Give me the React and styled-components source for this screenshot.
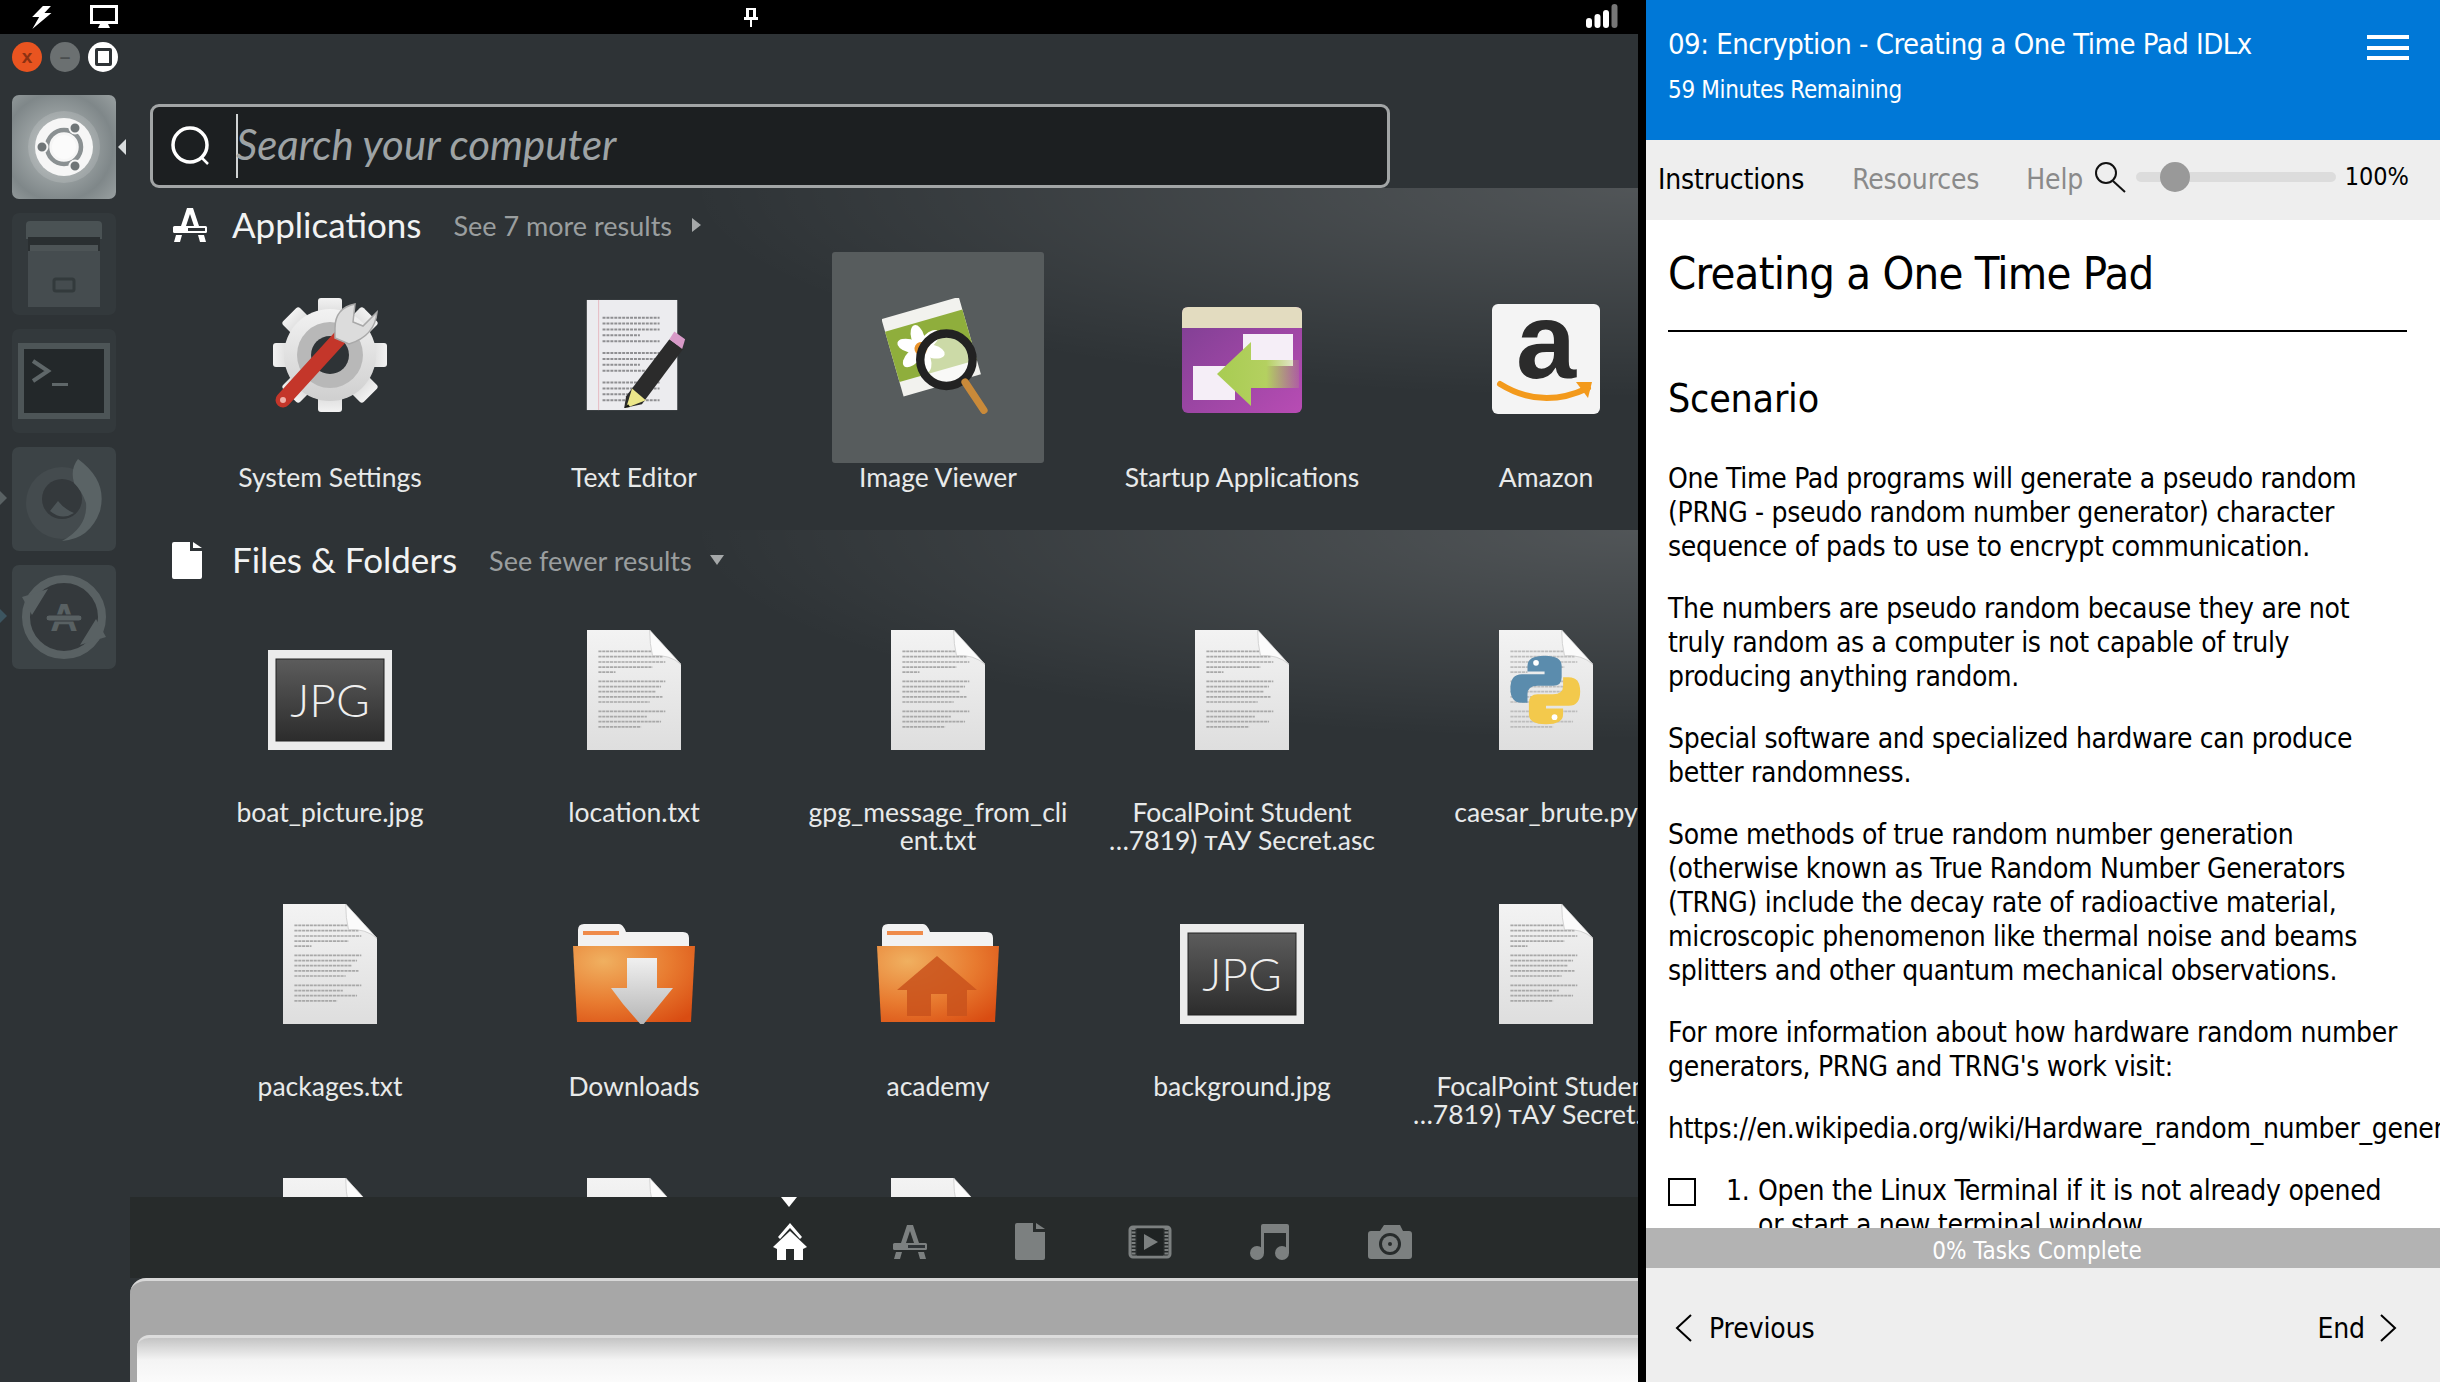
import React from "react";
import styled, { createGlobalStyle } from "styled-components";

const Global = createGlobalStyle`
  html, body { margin: 0; padding: 0; background: #000; }
  body { width: 2440px; height: 1382px; overflow: hidden; }
`;

const UI_FONT = `Lato, "Noto Sans", sans-serif`;
const DOC_FONT = `"DejaVu Sans Condensed", "DejaVu Sans", sans-serif`;

const Page = styled.div`
  display: flex;
  width: 2440px;
  height: 1382px;
  overflow: hidden;
`;

const Desktop = styled.div`
  width: 1646px;
  height: 1382px;
  background: #000;
  display: flex;
  flex-direction: column;
  flex-shrink: 0;
`;

const TopBar = styled.div`
  height: 34px;
  display: flex;
  align-items: center;
  padding: 0 28px 0 32px;
  color: #fff;
`;

const PinSlot = styled.div`
  margin-left: 625px;
  display: flex;
`;

const SignalSlot = styled.div`
  margin-left: auto;
  display: flex;
`;

const Dash = styled.div`
  width: 1638px;
  flex: 1;
  min-height: 0;
  display: flex;
  background: #2e3336;
  font-family: ${UI_FONT};
`;

const LauncherColumn = styled.div`
  width: 130px;
  flex-shrink: 0;
  box-sizing: border-box;
  padding: 8px 0 0 12px;
  position: relative;
`;

const WindowControls = styled.div`
  display: flex;
  gap: 8px;
  height: 53px;
`;

const WinBtn = styled.div`
  width: 30px;
  height: 30px;
  border-radius: 50%;
  display: flex;
  align-items: center;
  justify-content: center;
  background: ${(p) => p.$bg};
  color: ${(p) => p.$fg};
  font: 700 19px "Liberation Sans", sans-serif;
`;

const MaxSquare = styled.div`
  width: 11px;
  height: 12px;
  border: 3px solid #2e3336;
  border-radius: 2px;
`;

const Tiles = styled.div`
  display: flex;
  flex-direction: column;
  gap: 14px;
`;

const Tile = styled.div`
  width: 104px;
  height: ${(p) => p.$h || 102}px;
  border-radius: 7px;
  position: relative;
  display: flex;
  align-items: center;
  justify-content: center;
  background: ${(p) =>
    p.$active
      ? "radial-gradient(circle at 45% 50%, #c6cbcc 0%, #9aa1a2 38%, #7f8789 70%, #99a0a1 100%)"
      : p.$flat
      ? "#3c4346"
      : "#33393c"};
`;

const Pip = styled.div`
  position: absolute;
  top: ${(p) => p.$top}px;
  left: ${(p) => p.$left}px;
  width: 0;
  height: 0;
  border-top: ${(p) => p.$size}px solid transparent;
  border-bottom: ${(p) => p.$size}px solid transparent;
  ${(p) =>
    p.$dir === "left"
      ? `border-right: ${p.$size}px solid ${p.$color};`
      : `border-left: ${p.$size}px solid ${p.$color};`}
`;

const Main = styled.div`
  width: 1508px;
  display: flex;
  flex-direction: column;
  min-height: 0;
`;

const SearchWrap = styled.div`
  padding: 70px 0 0 20px;
  flex-shrink: 0;
`;

const SearchBox = styled.div`
  width: 1240px;
  height: 84px;
  box-sizing: border-box;
  border: 3px solid #a2a5a6;
  border-radius: 9px;
  background: #1c1f21;
  display: flex;
  align-items: center;
  padding-left: 17px;
`;

const Caret = styled.div`
  width: 2px;
  height: 64px;
  background: #d0d3d4;
  margin-left: 22px;
  margin-right: -2px;
`;

const SearchText = styled.div`
  font-size: 42px;
  font-style: italic;
  font-weight: 400;
  color: #9ea3a5;
  margin-top: -4px;
`;

const Results = styled.div`
  flex: 1;
  min-height: 0;
  overflow: hidden;
`;

const Section = styled.div`
  height: ${(p) => p.$h}px;
  box-sizing: border-box;
  padding-top: ${(p) => p.$pt}px;
  background: radial-gradient(
    ellipse 950px 210px at 100% 0,
    rgba(255, 255, 255, 0.17),
    rgba(255, 255, 255, 0) 100%
  );
`;

const SectionHead = styled.div`
  height: 60px;
  display: flex;
  align-items: center;
  padding-left: 42px;
`;

const HeadIcon = styled.div`
  width: 60px;
  display: flex;
`;

const SectionTitle = styled.div`
  font-size: 35px;
  color: #f2f3f3;
  margin-right: 32px;
  margin-top: -2px;
`;

const SectionMore = styled.div`
  font-size: 27px;
  color: #9a9e9f;
  margin-right: ${(p) => p.$gap}px;
`;

const Arrow = styled.div`
  width: 0;
  height: 0;
  ${(p) =>
    p.$down
      ? `border-left: 7px solid transparent; border-right: 7px solid transparent; border-top: 10px solid #a5a8a9;`
      : `border-top: 7px solid transparent; border-bottom: 7px solid transparent; border-left: 9px solid #a5a8a9;`}
`;

const Grid = styled.div`
  display: grid;
  grid-template-columns: repeat(5, 304px);
  grid-auto-rows: ${(p) => p.$row}px;
  margin-top: ${(p) => p.$mt}px;
  padding-left: 48px;
`;

const Cell = styled.div`
  display: flex;
  flex-direction: column;
  align-items: center;
  min-width: 0;
`;

const IconTile = styled.div`
  width: 212px;
  height: ${(p) => p.$h}px;
  flex-shrink: 0;
  box-sizing: border-box;
  padding-bottom: ${(p) => p.$pb}px;
  display: flex;
  align-items: flex-end;
  justify-content: center;
  border-radius: 3px;
  background: ${(p) => (p.$selected ? "#575c5d" : "transparent")};
`;

const Label = styled.div`
  font-size: 26.5px;
  line-height: 28px;
  color: #e8eaea;
  text-align: center;
  white-space: pre;
`;

const FilterBar = styled.div`
  height: 81px;
  flex-shrink: 0;
  background: #272b2b;
  display: flex;
  align-items: center;
  padding-left: 600px;
`;

const FilterSlot = styled.div`
  width: 120px;
  height: 81px;
  box-sizing: border-box;
  padding-top: 8px;
  display: flex;
  align-items: center;
  justify-content: center;
  position: relative;
  color: ${(p) => (p.$active ? "#fff" : "#7c8080")};
`;

const FilterMark = styled.div`
  position: absolute;
  top: 0;
  left: 51px;
  width: 0;
  height: 0;
  border-left: 8px solid transparent;
  border-right: 8px solid transparent;
  border-top: 10px solid #fff;
`;

const Preview = styled.div`
  height: 104px;
  flex-shrink: 0;
  box-sizing: border-box;
  border-top: 3px solid #d8d8d8;
  border-top-left-radius: 16px;
  background: #a7a7a7;
  padding: 54px 0 0 7px;
`;

const PreviewInner = styled.div`
  height: 100%;
  border-top: 3px solid #dcdcdc;
  border-top-left-radius: 12px;
  background: linear-gradient(#c4c4c4 0, #f4f4f4 22px, #fcfcfc 100%);
`;

const Lab = styled.div`
  width: 794px;
  height: 1382px;
  flex-shrink: 0;
  display: flex;
  flex-direction: column;
  background: #fff;
  font-family: ${DOC_FONT};
  color: #000;
`;

const LabHeader = styled.div`
  height: 140px;
  flex-shrink: 0;
  box-sizing: border-box;
  background: #0078d7;
  color: #fff;
  padding: 24px 31px 0 22px;
  display: flex;
  justify-content: space-between;
`;

const LabTitle = styled.div`
  font-size: 29px;
  line-height: 40px;
  letter-spacing: -0.5px;
`;

const LabSub = styled.div`
  font-size: 24px;
  line-height: 32px;
  margin-top: 10px;
  letter-spacing: -0.35px;
`;

const Burger = styled.div`
  width: 42px;
  height: 25px;
  margin-top: 11px;
  display: flex;
  flex-direction: column;
  justify-content: space-between;
  & > span {
    display: block;
    height: 4px;
    background: #fff;
  }
`;

const TabBar = styled.div`
  height: 80px;
  flex-shrink: 0;
  background: #eeeeee;
  display: flex;
  align-items: center;
  padding: 0 31px 0 12px;
`;

const TabItem = styled.div`
  font-size: 28px;
  letter-spacing: -0.15px;
  color: ${(p) => (p.$active ? "#000" : "#8a8a8a")};
  margin-right: ${(p) => p.$mr}px;
  margin-top: -2px;
`;

const ZoomIcon = styled.div`
  display: flex;
  margin-top: -6px;
`;

const Track = styled.div`
  width: 200px;
  height: 10px;
  border-radius: 5px;
  margin: -6px 0 0 10px;
  background: #dcdcdc;
  position: relative;
`;

const Thumb = styled.div`
  position: absolute;
  left: 24px;
  top: -10px;
  width: 30px;
  height: 30px;
  border-radius: 50%;
  background: #999;
`;

const ZoomPct = styled.div`
  font-size: 25px;
  margin-left: auto;
  margin-top: -7px;
`;

const LabBody = styled.div`
  flex: 1;
  min-height: 0;
  overflow: hidden;
  padding: 0 33px 0 22px;
`;

const H1 = styled.h1`
  margin: 0;
  padding-top: 26px;
  height: 112px;
  box-sizing: border-box;
  border-bottom: 2px solid #000;
  font-size: 45px;
  line-height: 56px;
  font-weight: 400;
  letter-spacing: -0.75px;
`;

const H2 = styled.h2`
  margin: 0;
  padding-top: 42px;
  height: 130px;
  box-sizing: border-box;
  font-size: 39px;
  line-height: 50px;
  font-weight: 400;
  letter-spacing: -0.2px;
`;

const Para = styled.p`
  margin: 0 0 28px;
  font-size: 28px;
  line-height: 34px;
  letter-spacing: -0.3px;
  white-space: ${(p) => (p.$nowrap ? "nowrap" : "normal")};
`;

const Task = styled.div`
  display: flex;
  font-size: 28px;
  line-height: 34px;
  letter-spacing: -0.27px;
`;

const Check = styled.div`
  width: 28px;
  height: 28px;
  box-sizing: border-box;
  border: 2px solid #000;
  flex-shrink: 0;
  margin: 4px 30px 0 0;
`;

const TaskNum = styled.div`
  width: 32px;
  flex-shrink: 0;
`;

const Progress = styled.div`
  height: 40px;
  flex-shrink: 0;
  box-sizing: border-box;
  padding: 3px 12px 0 0;
  background: #b3b3b3;
  color: #fff;
  font-size: 24px;
  line-height: 40px;
  text-align: center;
`;

const Footer = styled.div`
  height: 114px;
  flex-shrink: 0;
  box-sizing: border-box;
  padding: 6px 43px 0 29px;
  background: #eeeeee;
  display: flex;
  align-items: center;
  justify-content: space-between;
  font-size: 28px;
  letter-spacing: -0.1px;
`;

const NavItem = styled.div`
  display: flex;
  align-items: center;
  gap: ${(p) => p.$gap}px;
`;

/* ---------- drawn icons ---------- */

const Bolt = () => (
  <svg width="22" height="24" viewBox="0 0 22 24">
    <path d="M12 1 L20 1 L14 8 L21 8 L3 24 L9 12 L2 12 Z" fill="#fff" transform="translate(-1 0) skewX(-4)" />
  </svg>
);

const Monitor = () => (
  <svg width="28" height="24" viewBox="0 0 28 24" style={{ marginLeft: 36 }}>
    <rect x="1.5" y="1.5" width="25" height="16" fill="none" stroke="#fff" strokeWidth="3" />
    <path d="M10 19 H18 L20 23 H8 Z" fill="#fff" />
  </svg>
);

const Pin = () => (
  <svg width="16" height="22" viewBox="0 0 16 22">
    <path d="M3 2 H13 V11 H15 V14 H9 V21 H7 V14 H1 V11 H3 Z M6 4 V11 H10 V4 Z" fill="#fff" fillRule="evenodd" />
  </svg>
);

const Signal = () => (
  <svg width="32" height="26" viewBox="0 0 32 26">
    <rect x="0" y="14" width="6" height="10" rx="3" fill="#fff" />
    <rect x="8.5" y="10" width="6" height="14" rx="3" fill="#fff" />
    <rect x="17" y="6" width="6" height="18" rx="3" fill="#fff" />
    <rect x="25.5" y="0" width="6" height="24" rx="3" fill="#777" />
  </svg>
);

const UbuntuLogo = () => (
  <svg width="76" height="76" viewBox="0 0 76 76">
    <circle cx="38" cy="38" r="36" fill="#fff" opacity="0.14" />
    <circle cx="38" cy="38" r="29" fill="#f6f6f6" />
    <circle cx="38" cy="38" r="17" fill="none" stroke="#8a9092" strokeWidth="4.5" />
    <circle cx="38" cy="38" r="12" fill="#fbfbfb" />
    <g fill="#6f7577" stroke="#f6f6f6" strokeWidth="2">
      <circle cx="49" cy="19" r="5.5" />
      <circle cx="49" cy="57" r="5.5" />
      <circle cx="16" cy="38" r="5.5" />
    </g>
  </svg>
);

const CabinetIcon = () => (
  <svg width="84" height="86" viewBox="0 0 84 86">
    <path d="M4 4 Q4 0 8 0 H76 Q80 0 80 4 V18 H4 Z" fill="#4a5254" />
    <rect x="6" y="16" width="72" height="70" fill="#454c4f" />
    <rect x="6" y="16" width="72" height="14" fill="#2a2f31" />
    <rect x="8" y="24" width="68" height="6" fill="#4d5456" />
    <rect x="32" y="58" width="20" height="12" rx="2" fill="none" stroke="#333a3c" strokeWidth="3" />
  </svg>
);

const TerminalIcon = () => (
  <svg width="92" height="76" viewBox="0 0 92 76">
    <rect x="3" y="3" width="86" height="70" fill="#23282a" stroke="#4d5557" strokeWidth="6" />
    <path d="M15 18 L30 28 L15 38" fill="none" stroke="#5f6769" strokeWidth="4" />
    <rect x="34" y="40" width="16" height="3" fill="#5f6769" />
  </svg>
);

const FirefoxIcon = () => (
  <svg width="96" height="96" viewBox="0 0 96 96">
    <circle cx="46" cy="52" r="36" fill="#444b4e" />
    <circle cx="46" cy="48" r="20" fill="#34393c" />
    <path d="M62 8 Q92 30 84 60 Q74 88 46 90 Q72 76 70 52 Q66 40 58 32 Q54 18 62 8 Z" fill="#5a6365" />
    <path d="M34 60 Q46 70 58 62 Q48 58 42 50 Z" fill="#4d5558" />
  </svg>
);

const UpdaterIcon = () => (
  <svg width="92" height="92" viewBox="0 0 92 92">
    <circle cx="46" cy="46" r="38" fill="#34393c" stroke="#596163" strokeWidth="8" />
    <path d="M4 26 L30 18 L14 44 Z M88 66 L62 74 L78 48 Z" fill="#596163" />
    <text x="46" y="60" textAnchor="middle" fontFamily="Liberation Sans" fontWeight="700" fontSize="38" fill="#596163">A</text>
    <rect x="28" y="44" width="36" height="6" rx="3" fill="#596163" stroke="#34393c" strokeWidth="1" />
  </svg>
);

const AppsGlyph = ({ size = 36, color = "#fff" }) => (
  <svg width={size} height={size} viewBox="0 0 36 36" fill={color}>
    <path d="M15 1 H21 L27 19 H22 L18 7 L14 19 H9 Z" />
    <rect x="1" y="19" width="34" height="7" rx="1.5" />
    <rect x="16" y="21" width="17" height="3" fill="#2e3336" />
    <path d="M4 28 H10 L8 35 H2 Z M26 28 H32 L34 35 H28 Z" />
  </svg>
);

const FileGlyph = ({ color = "#fff", w = 30, h = 37 }) => (
  <svg width={w} height={h} viewBox="0 0 30 37" fill={color}>
    <path d="M2 0 H18 V9 H30 V35 Q30 37 28 37 H2 Q0 37 0 35 V2 Q0 0 2 0 Z" />
    <path d="M21 0 L30 6 H21 Z" />
  </svg>
);

const HomeGlyph = () => (
  <svg width="38" height="37" viewBox="0 0 38 37" fill="#fff">
    <path d="M19 0 L31 14 L29 16 L19 5 L9 16 L7 14 Z" />
    <path d="M19 8 L36 24 L32 26 V37 H23 V26 H15 V37 H6 V26 L2 24 Z" />
  </svg>
);

const VideoGlyph = () => (
  <svg width="44" height="34" viewBox="0 0 44 34">
    <rect x="2" y="2" width="40" height="30" rx="3" fill="none" stroke="currentColor" strokeWidth="3" />
    <path d="M5.5 3 V31 M38.5 3 V31" stroke="currentColor" strokeWidth="4" strokeDasharray="2 1.5" />
    <rect x="9" y="3.5" width="26" height="27" fill="#1f2323" />
    <path d="M16 9 L30 17 L16 25 Z" fill="currentColor" />
  </svg>
);

const MusicGlyph = () => (
  <svg width="44" height="36" viewBox="0 0 44 36" fill="currentColor">
    <circle cx="9" cy="29" r="7" />
    <circle cx="34" cy="29" r="7" />
    <path d="M13 29 V2 Q13 0 15 0 H39 Q41 0 41 2 V29 H38 V9 H16 V29 Z" />
  </svg>
);

const CameraGlyph = () => (
  <svg width="44" height="34" viewBox="0 0 44 34">
    <path d="M3 6 H12 L16 0 H32 L35 6 H41 Q44 6 44 9 V31 Q44 34 41 34 H3 Q0 34 0 31 V9 Q0 6 3 6 Z" fill="currentColor" />
    <circle cx="22" cy="19" r="11" fill="#272b2b" />
    <circle cx="22" cy="19" r="8" fill="currentColor" />
    <circle cx="22" cy="19" r="2" fill="#272b2b" />
  </svg>
);

const SettingsIcon = () => (
  <svg width="118" height="118" viewBox="0 0 118 118">
    <defs>
      <linearGradient id="gearFill" x1="0" y1="0" x2="0" y2="1">
        <stop offset="0" stopColor="#f2f2f2" />
        <stop offset="1" stopColor="#cfcfcf" />
      </linearGradient>
    </defs>
    <g fill="url(#gearFill)">
      {[0, 45, 90, 135, 180, 225, 270, 315].map((a) => (
        <rect key={a} x="47" y="2" width="24" height="26" rx="3" transform={`rotate(${a} 59 59)`} />
      ))}
      <circle cx="59" cy="59" r="46" />
    </g>
    <circle cx="59" cy="59" r="33" fill="#b8b8b8" />
    <circle cx="59" cy="59" r="19" fill="#2e3336" />
    <path d="M12 104 L74 36" stroke="#c4362a" strokeWidth="15" strokeLinecap="round" />
    <circle cx="12" cy="104" r="3" fill="#efb0a8" />
    <path d="M64 42 L78 48 Q104 40 106 16 L92 30 L82 26 L84 8 Q64 12 64 32 Z" fill="#dcdcdc" stroke="#a9a9a9" strokeWidth="1.5" />
  </svg>
);

const docLines = [
  [15, 47], [18.7, 45], [22.4, 47], [26, 38], [29.5, 12],
  [36, 47], [39.6, 44], [43.2, 40], [46.8, 45], [50.4, 36],
  [57, 47], [60.6, 34], [64.2, 44], [67.8, 30],
];

const DocBase = ({ id, lineColor = "#a8a8a8", children, width = 94, height = 120 }) => (
  <svg width={width} height={height} viewBox="0 0 66 84" preserveAspectRatio="none">
    <defs>
      <linearGradient id={id} x1="0" y1="0" x2="0" y2="1">
        <stop offset="0" stopColor="#f3f3f3" />
        <stop offset="1" stopColor="#dedede" />
      </linearGradient>
    </defs>
    <path d="M0 0 H44 L66 24 V84 H0 Z" fill={`url(#${id})`} />
    {docLines.map(([y, w]) => (
      <line key={y} x1="8" x2={8 + w} y1={y} y2={y} stroke={lineColor} strokeWidth="1.2" strokeDasharray="2.2 0.5" />
    ))}
    <path d="M44 0 L66 24 Q58 17 46 18 Q44 10 44 0 Z" fill="#fbfbfb" stroke="#c4c4c4" strokeWidth="0.5" />
    {children}
  </svg>
);

const TextDoc = ({ id }) => <DocBase id={id} />;

const PythonDoc = () => (
  <DocBase id="docPy" lineColor="#bdbdbd">
    <path d="M32 18 Q20 18 20 25 V29 H32 V31 H16 Q8 31 8 41 Q8 51 16 51 H20 V45 Q20 39 27 39 H38 Q44 39 44 33 V25 Q44 18 32 18 Z" fill="#5b8cad" />
    <path d="M33 66 Q45 66 45 59 V55 H33 V53 H49 Q57 53 57 43 Q57 33 49 33 H45 V39 Q45 45 38 45 H27 Q21 45 21 51 V59 Q21 66 33 66 Z" fill="#f3c94c" />
    <circle cx="26" cy="23" r="2" fill="#fff" />
    <circle cx="39" cy="61" r="2" fill="#fff" />
  </DocBase>
);

const EditorIcon = () => (
  <svg width="104" height="116" viewBox="0 0 104 118">
    <rect x="4" y="2" width="92" height="112" fill="#ececef" />
    <line x1="16" x2="16" y1="2" y2="114" stroke="#e6b9c2" strokeWidth="1" />
    {[20, 26, 32, 38, 44, 56, 62, 68, 74, 86, 92, 98, 104].map((y, i) => (
      <line key={y} x1="20" x2={i % 4 === 3 ? 58 : 78} y1={y} y2={y} stroke="#8f8f92" strokeWidth="2" strokeDasharray="3 1" />
    ))}
    <path d="M44 100 L88 42 L102 52 L60 108 L42 112 Z" fill="#2b2b2b" />
    <path d="M88 42 L93 34 L104 42 L101 52 Z" fill="#d89ac8" />
    <path d="M50 92 L64 104 L44 112 Z" fill="#ece78a" />
    <path d="M42 112 L46 108 L48 111 Z" fill="#111" />
  </svg>
);

const ViewerIcon = () => (
  <svg width="112" height="116" viewBox="0 0 118 124">
    <g transform="rotate(-16 48 50)">
      <rect x="8" y="10" width="86" height="86" fill="#f2f2ee" />
      <rect x="8" y="24" width="86" height="56" fill="#8fae3c" />
      {[0, 60, 120, 180, 240, 300].map((a) => (
        <ellipse key={a} cx="40" cy="40" rx="7" ry="13" fill="#fff" transform={`rotate(${a} 40 52) translate(0 -1)`} />
      ))}
      <circle cx="40" cy="52" r="7" fill="#e9932b" />
    </g>
    <circle cx="68" cy="66" r="28" fill="rgba(255,255,255,0.55)" stroke="#222" strokeWidth="9" />
    <path d="M88 90 L108 120" stroke="#c98a3a" strokeWidth="8" strokeLinecap="round" />
  </svg>
);

const StartupIcon = () => (
  <svg width="122" height="108" viewBox="0 0 122 108">
    <defs>
      <linearGradient id="suBody" x1="0" y1="0" x2="1" y2="1">
        <stop offset="0" stopColor="#7d3f92" />
        <stop offset="1" stopColor="#b84cb4" />
      </linearGradient>
      <linearGradient id="suArrow" x1="0" y1="0" x2="1" y2="0">
        <stop offset="0" stopColor="#a8cc52" />
        <stop offset="0.6" stopColor="#b4d060" />
        <stop offset="1" stopColor="#b4d060" stopOpacity="0.15" />
      </linearGradient>
    </defs>
    <rect x="1" y="1" width="120" height="106" rx="6" fill="url(#suBody)" />
    <path d="M1 22 V7 Q1 1 7 1 H115 Q121 1 121 7 V22 Z" fill="#e3dcc0" />
    <rect x="62" y="28" width="50" height="32" fill="#f5eef7" />
    <rect x="12" y="60" width="42" height="34" fill="#f5eef7" />
    <path d="M36 68 L70 36 V54 H118 V82 H70 V100 Z" fill="url(#suArrow)" />
  </svg>
);

const AmazonIcon = () => (
  <svg width="108" height="110" viewBox="0 0 108 110">
    <rect width="108" height="110" rx="6" fill="#f4f4f4" />
    <text x="54" y="74" textAnchor="middle" fontFamily="Liberation Sans" fontWeight="700" fontSize="108" fill="#2b2b2b">a</text>
    <path d="M8 80 Q50 106 96 84" fill="none" stroke="#f39a1c" strokeWidth="6" strokeLinecap="round" />
    <path d="M84 78 L100 78 L96 94 Z" fill="#f39a1c" />
  </svg>
);

const JpgIcon = ({ id, width = 124, height = 100 }) => (
  <svg width={width} height={height} viewBox="0 0 124 100">
    <defs>
      <linearGradient id={id} x1="0" y1="0" x2="0" y2="1">
        <stop offset="0" stopColor="#5c5c5c" />
        <stop offset="1" stopColor="#2c2c2c" />
      </linearGradient>
    </defs>
    <rect width="124" height="100" fill="#ececec" />
    <rect x="8" y="9" width="108" height="82" fill={`url(#${id})`} stroke="#222" strokeWidth="1" />
    <text x="62" y="67" textAnchor="middle" fontFamily="Lato" fontWeight="300" fontSize="46" fill="#efefef">JPG</text>
  </svg>
);

const FolderIcon = ({ id, kind }) => (
  <svg width="122" height="100" viewBox="0 0 122 100">
    <defs>
      <radialGradient id={id} cx="0.25" cy="0.2" r="1">
        <stop offset="0" stopColor="#f0b060" />
        <stop offset="0.55" stopColor="#e87b30" />
        <stop offset="1" stopColor="#d94c12" />
      </radialGradient>
      <linearGradient id={`${id}Arrow`} x1="0" y1="0" x2="0" y2="1">
        <stop offset="0" stopColor="#f0f0f0" />
        <stop offset="1" stopColor="#b4b4b4" />
      </linearGradient>
    </defs>
    <path d="M5 24 V6 Q5 0 11 0 H46 Q50 0 53 8 H110 Q116 8 116 14 V28 H5 Z" fill="#f2f2f2" />
    <rect x="10" y="7" width="36" height="4" fill="#ef8b4a" />
    <path d="M0 22 H122 L118 98 H4 Z" fill={`url(#${id})`} />
    {kind === "download" ? (
      <path d="M54 34 H84 V64 H100 L69 102 L50 80 L38 64 H54 Z" fill={`url(#${id}Arrow)`} />
    ) : (
      <path d="M60 32 L100 66 H90 V92 H70 V70 H54 V92 H30 V66 H20 Z" fill="#c9521c" opacity="0.85" />
    )}
  </svg>
);

const Chevron = ({ flip }) => (
  <svg width="18" height="28" viewBox="0 0 18 28" fill="none" stroke="#000" strokeWidth="2">
    <path d={flip ? "M2 1 L16 14 L2 27" : "M16 1 L2 14 L16 27"} />
  </svg>
);

const Magnifier = () => (
  <svg width="32" height="32" viewBox="0 0 32 32" fill="none" stroke="#111" strokeWidth="2">
    <circle cx="12" cy="12" r="10" />
    <path d="M19 20 L31 31" />
  </svg>
);

const SearchGlass = () => (
  <svg width="44" height="44" viewBox="0 0 44 44" fill="none" stroke="#fff">
    <circle cx="20" cy="21" r="17" strokeWidth="3.5" />
    <path d="M32 34 L38 40" strokeWidth="2.5" />
  </svg>
);

/* ---------- data ---------- */

const apps = [
  { label: "System Settings", icon: <SettingsIcon /> },
  { label: "Text Editor", icon: <EditorIcon /> },
  { label: "Image Viewer", icon: <ViewerIcon />, selected: true },
  { label: "Startup Applications", icon: <StartupIcon /> },
  { label: "Amazon", icon: <AmazonIcon /> },
];

const files = [
  { label: "boat_picture.jpg", icon: <JpgIcon id="jpgA" /> },
  { label: "location.txt", icon: <TextDoc id="docA" /> },
  { label: "gpg_message_from_cli\nent.txt", icon: <TextDoc id="docB" /> },
  { label: "FocalPoint Student\n…7819) тАУ Secret.asc", icon: <TextDoc id="docC" /> },
  { label: "caesar_brute.py", icon: <PythonDoc /> },
  { label: "packages.txt", icon: <TextDoc id="docD" /> },
  { label: "Downloads", icon: <FolderIcon id="fldA" kind="download" /> },
  { label: "academy", icon: <FolderIcon id="fldB" kind="home" /> },
  { label: "background.jpg", icon: <JpgIcon id="jpgB" /> },
  { label: "FocalPoint Student\n…7819) тАУ Secret.asc", icon: <TextDoc id="docE" /> },
  { label: "", icon: <TextDoc id="docF" /> },
  { label: "", icon: <TextDoc id="docG" /> },
  { label: "", icon: <TextDoc id="docH" /> },
];

const paragraphs = [
  "One Time Pad programs will generate a pseudo random (PRNG - pseudo random number generator) character sequence of pads to use to encrypt communication.",
  "The numbers are pseudo random because they are not truly random as a computer is not capable of truly producing anything random.",
  "Special software and specialized hardware can produce better randomness.",
  "Some methods of true random number generation (otherwise known as True Random Number Generators (TRNG) include the decay rate of radioactive material, microscopic phenomenon like thermal noise and beams splitters and other quantum mechanical observations.",
  "For more information about how hardware random number generators, PRNG and TRNG's work visit:",
];

export default function App() {
  return (
    <>
      <Global />
      <Page>
        <Desktop>
          <TopBar>
            <Bolt />
            <Monitor />
            <PinSlot><Pin /></PinSlot>
            <SignalSlot><Signal /></SignalSlot>
          </TopBar>
          <Dash>
            <LauncherColumn>
              <WindowControls>
                <WinBtn $bg="#e95420" $fg="#8c3112">x</WinBtn>
                <WinBtn $bg="#6b7071" $fg="#4a4e4f">–</WinBtn>
                <WinBtn $bg="#fff" $fg="#2e3336"><MaxSquare /></WinBtn>
              </WindowControls>
              <Tiles>
                <Tile $active $h={104}>
                  <UbuntuLogo />
                  <Pip $dir="left" $size={8} $color="#d8dcdd" $top={44} $left={106} />
                </Tile>
                <Tile><CabinetIcon /></Tile>
                <Tile $h={104}><TerminalIcon /></Tile>
                <Tile $flat $h={104}><FirefoxIcon /></Tile>
                <Tile $flat $h={104}><UpdaterIcon /></Tile>
              </Tiles>
              <Pip $size={7} $dir="right" $color="#596163" $top={457} $left={0} />
              <Pip $size={7} $dir="right" $color="#3c5560" $top={575} $left={0} />
            </LauncherColumn>
            <Main>
              <SearchWrap>
                <SearchBox>
                  <SearchGlass />
                  <Caret />
                  <SearchText>Search your computer</SearchText>
                </SearchBox>
              </SearchWrap>
              <Results>
                <Section $h={342} $pt={7}>
                  <SectionHead>
                    <HeadIcon><AppsGlyph /></HeadIcon>
                    <SectionTitle>Applications</SectionTitle>
                    <SectionMore $gap={20}>See 7 more results</SectionMore>
                    <Arrow />
                  </SectionHead>
                  <Grid $row={275} $mt={-3}>
                    {apps.map((a) => (
                      <Cell key={a.label}>
                        <IconTile $h={211} $pb={49} $selected={a.selected}>{a.icon}</IconTile>
                        <Label>{a.label}</Label>
                      </Cell>
                    ))}
                  </Grid>
                </Section>
                <Section $h={700} $pt={0}>
                  <SectionHead>
                    <HeadIcon><FileGlyph /></HeadIcon>
                    <SectionTitle>Files &amp; Folders</SectionTitle>
                    <SectionMore $gap={18}>See fewer results</SectionMore>
                    <Arrow $down />
                  </SectionHead>
                  <Grid $row={274} $mt={32}>
                    {files.map((f, i) => (
                      <Cell key={i}>
                        <IconTile $h={176} $pb={48}>{f.icon}</IconTile>
                        <Label>{f.label}</Label>
                      </Cell>
                    ))}
                  </Grid>
                </Section>
              </Results>
              <FilterBar>
                <FilterSlot $active><FilterMark /><HomeGlyph /></FilterSlot>
                <FilterSlot><AppsGlyph color="#7c8080" /></FilterSlot>
                <FilterSlot><FileGlyph color="#7c8080" /></FilterSlot>
                <FilterSlot><VideoGlyph /></FilterSlot>
                <FilterSlot><MusicGlyph /></FilterSlot>
                <FilterSlot><CameraGlyph /></FilterSlot>
              </FilterBar>
              <Preview><PreviewInner /></Preview>
            </Main>
          </Dash>
        </Desktop>
        <Lab>
          <LabHeader>
            <div>
              <LabTitle>09: Encryption - Creating a One Time Pad IDLx</LabTitle>
              <LabSub>59 Minutes Remaining</LabSub>
            </div>
            <Burger><span /><span /><span /></Burger>
          </LabHeader>
          <TabBar>
            <TabItem $active $mr={48}>Instructions</TabItem>
            <TabItem $mr={47}>Resources</TabItem>
            <TabItem $mr={11}>Help</TabItem>
            <ZoomIcon><Magnifier /></ZoomIcon>
            <Track><Thumb /></Track>
            <ZoomPct>100%</ZoomPct>
          </TabBar>
          <LabBody>
            <H1>Creating a One Time Pad</H1>
            <H2>Scenario</H2>
            {paragraphs.map((t) => (
              <Para key={t}>{t}</Para>
            ))}
            <Para $nowrap>https://en.wikipedia.org/wiki/Hardware_random_number_generator</Para>
            <Task>
              <Check />
              <TaskNum>1.</TaskNum>
              <div>Open the Linux Terminal if it is not already opened or start a new terminal window</div>
            </Task>
          </LabBody>
          <Progress>0% Tasks Complete</Progress>
          <Footer>
            <NavItem $gap={16}><Chevron /><span>Previous</span></NavItem>
            <NavItem $gap={14}><span>End</span><Chevron flip /></NavItem>
          </Footer>
        </Lab>
      </Page>
    </>
  );
}
